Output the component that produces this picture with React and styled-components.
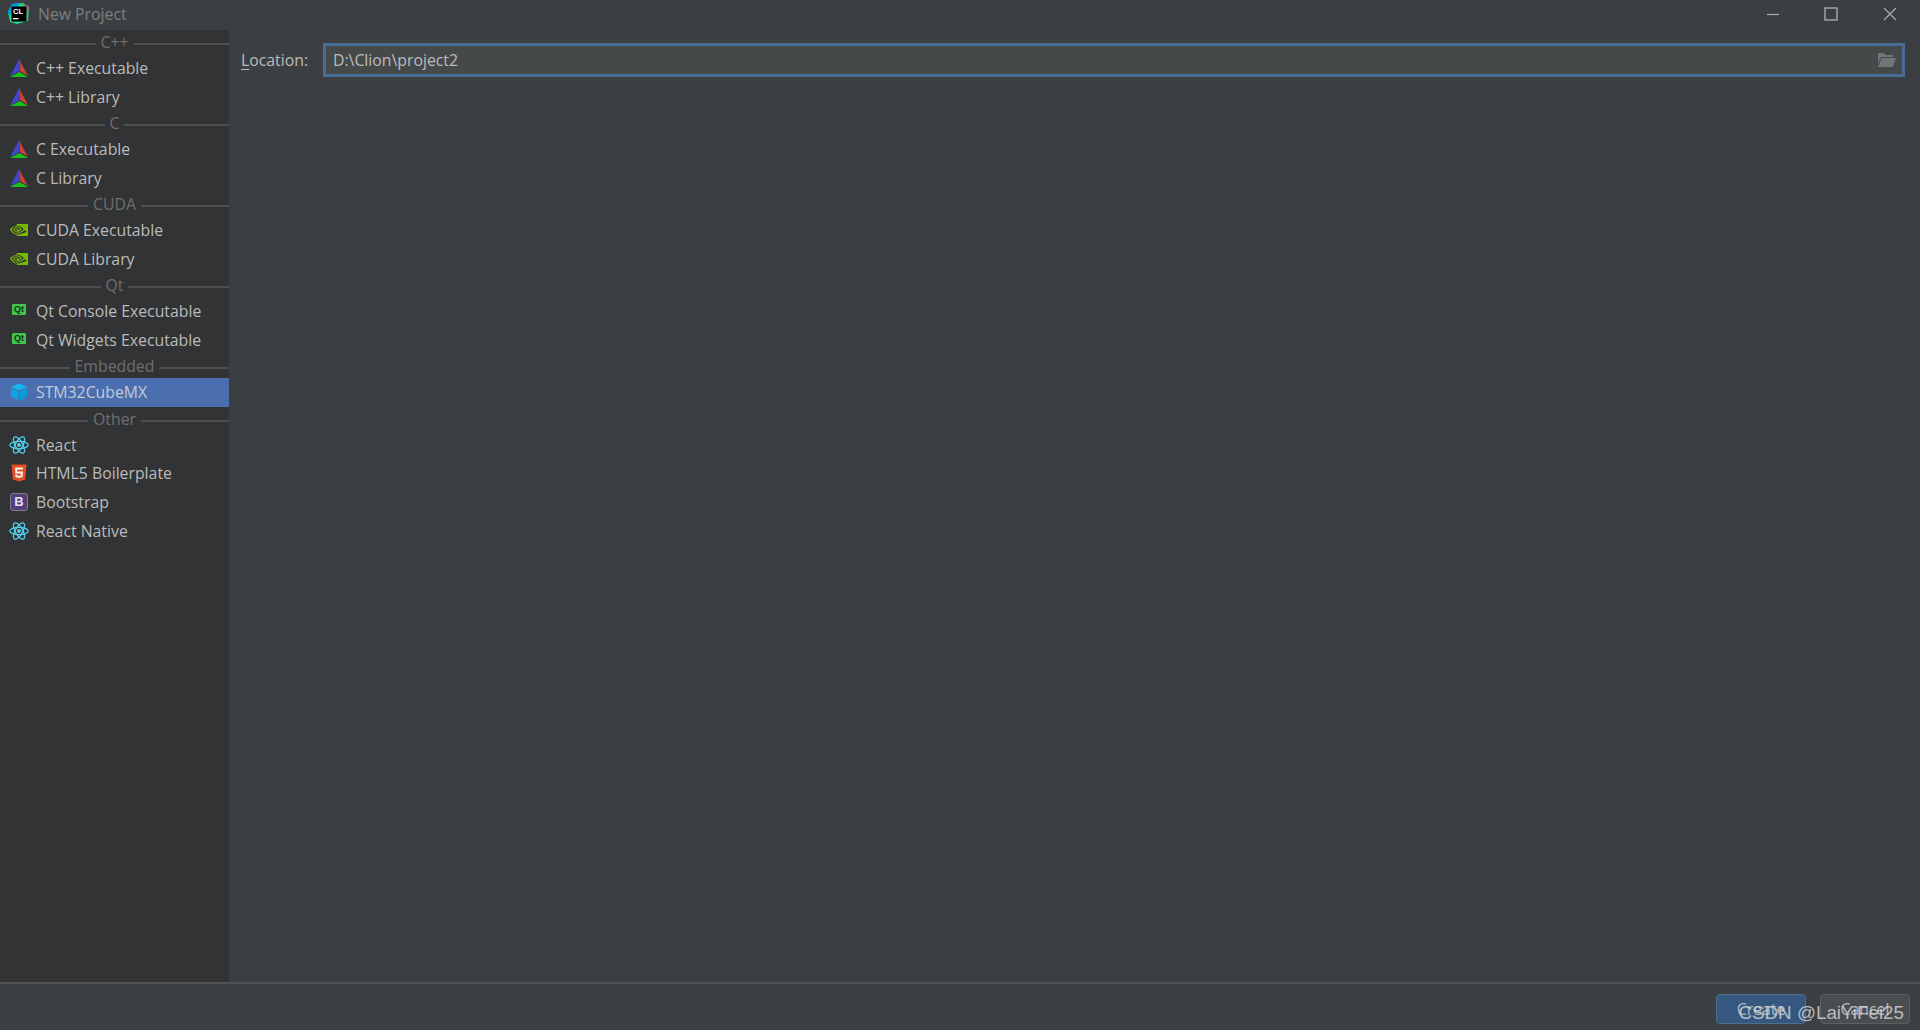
import React from 'react'
import styled, { createGlobalStyle } from 'styled-components'
import { SiNvidia } from 'react-icons/si'

const Global = createGlobalStyle`
  html, body { margin: 0; padding: 0; height: 100%; background: #3c3f41; }
  #root { height: 100%; }
`

const Window = styled.div`
  position: relative;
  height: 1030px;
  display: flex;
  flex-direction: column;
  background: #3c3f41;
  color: #bbbbbb;
  font-family: "Open Sans", "Noto Sans", "Liberation Sans", sans-serif;
  font-size: 15.8px;
  overflow: hidden;
`
const TitleBar = styled.div`
  height: 30px;
  box-sizing: border-box;
  flex: none;
  display: flex;
  align-items: center;
  padding: 0 1px 3px 8px;
  color: #7d7f80;
`
const TitleText = styled.span`
  flex: 1;
  margin-left: 8px;
`
const WinButton = styled.div`
  width: 58.6px;
  height: 27px;
  display: flex;
  align-items: center;
  justify-content: center;
  color: #a9abac;
`
const Body = styled.div`
  flex: 1;
  display: flex;
  min-height: 0;
`
const Sidebar = styled.div`
  width: 229px;
  flex: none;
  background: #313335;
  display: flex;
  flex-direction: column;
`
const Separator = styled.div`
  height: 23.5px;
  display: flex;
  align-items: flex-start;
  gap: 5px;
  color: #6e6f70;
  line-height: 25px;

  &::before, &::after {
    content: '';
    flex: 1;
    height: 2px;
    margin-top: 13px;
    background: #4d4f51;
  }
`
const Row = styled.div`
  height: 28.8px;
  display: flex;
  align-items: center;
  gap: 7px;
  padding-left: 9px;
  background: ${p => (p.$selected ? '#4b6eaf' : 'transparent')};
  color: ${p => (p.$selected ? '#c3cad6' : '#bbbbbb')};
`
const IconBox = styled.span`
  width: 20px;
  height: 20px;
  flex: none;
  display: flex;
  align-items: center;
  justify-content: center;
`
const QtBadge = styled.span`
  width: 14px;
  height: 11px;
  margin-top: -3px;
  background: #3ec64b;
  color: #1d2b20;
  font: bold 9px/11px "Liberation Sans", sans-serif;
  text-align: center;
  border-radius: 1px;
`
const BootstrapBadge = styled.span`
  width: 16px;
  height: 16px;
  border: 1px solid #7d7f86;
  border-radius: 3px;
  background: #563d7c;
  color: #e6e0ee;
  font: bold 13px/16px "Liberation Sans", sans-serif;
  text-align: center;
`
const Main = styled.div`
  flex: 1;
  min-width: 0;
  padding: 13px 15px 0 12px;
`
const LocationRow = styled.div`
  display: flex;
  align-items: center;
  gap: 15px;
`
const Label = styled.label`
  width: 67px;
  flex: none;
  color: #bbbbbb;
  white-space: nowrap;
  & u { text-underline-offset: 3px; }
`
const InputBox = styled.div`
  flex: 1;
  height: 28px;
  display: flex;
  align-items: center;
  justify-content: space-between;
  padding: 0 6px 0 7px;
  background: #45494a;
  border: 3px solid #466d94;
  color: #bbbbbb;
`
const Footer = styled.div`
  height: 48px;
  box-sizing: border-box;
  flex: none;
  border-top: 2px solid #505253;
  display: flex;
  justify-content: flex-end;
  align-items: flex-start;
  gap: 14px;
  padding: 10px 10px 0 0;
`
const Button = styled.div`
  width: 88px;
  height: 28px;
  border: 1px solid ${p => (p.$primary ? '#4c708c' : '#5e6060')};
  border-radius: 4px;
  background: ${p => (p.$primary ? '#365880' : '#4a4d4f')};
  color: #b4b7b9;
  text-align: center;
  line-height: 28px;
`
const Watermark = styled.div`
  position: absolute;
  right: 16px;
  bottom: 6px;
  font: 18.8px "Liberation Sans", sans-serif;
  color: rgba(215, 218, 220, 0.8);
  white-space: nowrap;
`

const ClionIcon = () => (
  <svg width="22" height="22" viewBox="0 0 22 22">
    <path d="M4 1 L15 0 L21 4 L20 18 L9 21 L2 19 L0 9 Z" fill="#21d789" />
    <path d="M4 1 L12 0 L8 6 L1 12 L0 9 Z" fill="#009ae5" />
    <path d="M15 0 L21 4 L20 10 L16 6 Z" fill="#ed358c" opacity="0.7" />
    <rect x="3.5" y="3.5" width="15" height="15" fill="#000" />
    <text x="5" y="11" fontFamily="Liberation Sans" fontWeight="bold" fontSize="7.5" fill="#fff">CL</text>
    <rect x="5" y="15" width="5.5" height="1.3" fill="#fff" />
  </svg>
)
const CmakeIcon = () => (
  <svg width="20" height="20" viewBox="0 0 20 20">
    <path d="M10 1 L10.6 13 L1 18.5 Z" fill="#3f46c8" />
    <path d="M10 1 L19 18 L11 13 Z" fill="#c8413c" />
    <path d="M1 19 L10.5 14 L19 19 Z" fill="#17c217" />
  </svg>
)
const CubeIcon = () => (
  <svg width="18" height="18" viewBox="0 0 18 18">
    <path d="M9 0.5 L17 4 L9 7.5 L1 4 Z" fill="#17b5ee" />
    <path d="M1 5 L8.4 8.5 L8.4 17.5 L1 13.5 Z" fill="#0ea5e4" />
    <path d="M17 5 L9.6 8.5 L9.6 17.5 L17 13.5 Z" fill="#0b9bd8" />
  </svg>
)
const ReactIcon = () => (
  <svg width="20" height="20" viewBox="-10 -10 20 20" fill="none" stroke="#53cdec" strokeWidth="1.3">
    <circle r="2" fill="#53cdec" stroke="none" />
    <ellipse rx="9.2" ry="3.7" />
    <ellipse rx="9.2" ry="3.7" transform="rotate(60)" />
    <ellipse rx="9.2" ry="3.7" transform="rotate(120)" />
  </svg>
)
const Html5Icon = () => (
  <svg width="16" height="18" viewBox="0 0 16 18">
    <path d="M0.5 0.5 H15.5 L14.2 15.5 L8 17.5 L1.8 15.5 Z" fill="#e44d26" />
    <path d="M4 3.5 H12 V5.5 H6 L6.2 7.5 H12 L11.5 13 L8 14 L4.5 13 L4.3 10.5 H6.2 L6.3 11.5 L8 12 L9.7 11.5 L9.9 9.5 H4.4 Z" fill="#f4f1ee" />
  </svg>
)
const FolderIcon = () => (
  <svg width="19" height="15" viewBox="0 0 19 15">
    <path d="M1 0 H7 L8.5 2 H16 V4 H4 L1 11 Z" fill="#6e7678" />
    <path d="M4.5 5 H19 L16 14 H1 Z" fill="#6e7678" />
  </svg>
)

const groups = [
  { title: 'C++', items: [['C++ Executable', 'cmake'], ['C++ Library', 'cmake']] },
  { title: 'C', items: [['C Executable', 'cmake'], ['C Library', 'cmake']] },
  { title: 'CUDA', items: [['CUDA Executable', 'nvidia'], ['CUDA Library', 'nvidia']] },
  { title: 'Qt', items: [['Qt Console Executable', 'qt'], ['Qt Widgets Executable', 'qt']] },
  { title: 'Embedded', items: [['STM32CubeMX', 'cube']] },
  { title: 'Other', items: [['React', 'react'], ['HTML5 Boilerplate', 'html'], ['Bootstrap', 'bootstrap'], ['React Native', 'react']] },
]

function ItemIcon({ kind }) {
  if (kind === 'cmake') return <CmakeIcon />
  if (kind === 'nvidia') return <SiNvidia size={18} color="#76b900" />
  if (kind === 'qt') return <QtBadge>Qt</QtBadge>
  if (kind === 'cube') return <CubeIcon />
  if (kind === 'react') return <ReactIcon />
  if (kind === 'html') return <Html5Icon />
  return <BootstrapBadge>B</BootstrapBadge>
}

export default function App() {
  return (
    <Window>
      <Global />
      <TitleBar>
        <ClionIcon />
        <TitleText>New Project</TitleText>
        <WinButton>
          <svg width="14" height="14" viewBox="0 0 14 14"><path d="M1 7.5 H13" stroke="currentColor" strokeWidth="1.2" /></svg>
        </WinButton>
        <WinButton>
          <svg width="14" height="14" viewBox="0 0 14 14"><rect x="1" y="1" width="12" height="12" fill="none" stroke="currentColor" strokeWidth="1.4" /></svg>
        </WinButton>
        <WinButton>
          <svg width="14" height="14" viewBox="0 0 14 14"><path d="M1 1 L13 13 M13 1 L1 13" stroke="currentColor" strokeWidth="1.2" /></svg>
        </WinButton>
      </TitleBar>
      <Body>
        <Sidebar>
          {groups.map(group => (
            <React.Fragment key={group.title}>
              <Separator>{group.title}</Separator>
              {group.items.map(([name, kind]) => (
                <Row key={name} $selected={name === 'STM32CubeMX'}>
                  <IconBox><ItemIcon kind={kind} /></IconBox>
                  {name}
                </Row>
              ))}
            </React.Fragment>
          ))}
        </Sidebar>
        <Main>
          <LocationRow>
            <Label><u>L</u>ocation:</Label>
            <InputBox>
              D:\Clion\project2
              <FolderIcon />
            </InputBox>
          </LocationRow>
        </Main>
      </Body>
      <Footer>
        <Button $primary>Create</Button>
        <Button>Cancel</Button>
      </Footer>
      <Watermark>CSDN @LaiYiFei25</Watermark>
    </Window>
  )
}
